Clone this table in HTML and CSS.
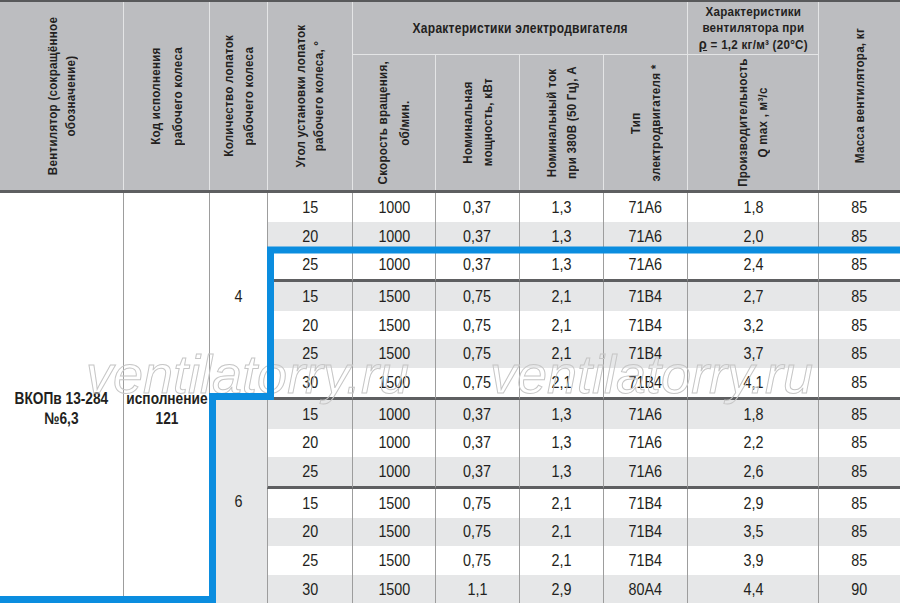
FILE: index.html
```html
<!DOCTYPE html>
<html lang="ru">
<head>
<meta charset="utf-8">
<title>ВКОПв 13-284 №6,3</title>
<link rel="stylesheet" href="styles.css">
</head>
<body>
<div class="sheet">
  <div class="cols head">
    <div class="hc tall first"><span class="vt lh18">Вентилятор (сокращённое<br>обозначение)</span></div>
    <div class="hc tall"><span class="vt lh22">Код исполнения<br>рабочего колеса</span></div>
    <div class="hc tall"><span class="vt">Количество лопаток<br>рабочего колеса</span></div>
    <div class="hc tall"><span class="vt lh18">Угол установки лопаток<br>рабочего колеса, °</span></div>
    <div class="hc grp"><span class="ht">Характеристики электродвигателя</span></div>
    <div class="hc grp2"><span class="ht">Характеристики<br>вентилятора при<br><span class="rho">ρ</span> = 1,2 кг/м³ (20°С)</span></div>
    <div class="hc tall"><span class="vt">Масса вентилятора, кг</span></div>
    <div class="hc"><span class="vt lh22">Скорость вращения,<br>об/мин.</span></div>
    <div class="hc"><span class="vt">Номинальная<br>мощность, кВт</span></div>
    <div class="hc"><span class="vt">Номинальный ток<br>при 380В (50 Гц), А</span></div>
    <div class="hc"><span class="vt">Тип<br>электродвигателя *</span></div>
    <div class="hc"><span class="vt">Производительность<br>Q max , м³/с</span></div>
  </div>

  <div class="cols body">
    <div class="bc name"><span>ВКОПв 13-284<br>№6,3</span></div>
    <div class="bc code"><span>исполнение<br>121</span></div>
    <div class="bc blades4"><span>4</span></div>
    <div class="bc blades6"><span>6</span></div>

    <div class="r"><div class="bc"><span>15</span></div><div class="bc"><span>1000</span></div><div class="bc"><span>0,37</span></div><div class="bc"><span>1,3</span></div><div class="bc"><span>71А6</span></div><div class="bc"><span>1,8</span></div><div class="bc"><span>85</span></div></div>
    <div class="r alt"><div class="bc"><span>20</span></div><div class="bc"><span>1000</span></div><div class="bc"><span>0,37</span></div><div class="bc"><span>1,3</span></div><div class="bc"><span>71А6</span></div><div class="bc"><span>2,0</span></div><div class="bc"><span>85</span></div></div>
    <div class="r sep"><div class="bc"><span>25</span></div><div class="bc"><span>1000</span></div><div class="bc"><span>0,37</span></div><div class="bc"><span>1,3</span></div><div class="bc"><span>71А6</span></div><div class="bc"><span>2,4</span></div><div class="bc"><span>85</span></div></div>
    <div class="r alt"><div class="bc"><span>15</span></div><div class="bc"><span>1500</span></div><div class="bc"><span>0,75</span></div><div class="bc"><span>2,1</span></div><div class="bc"><span>71В4</span></div><div class="bc"><span>2,7</span></div><div class="bc"><span>85</span></div></div>
    <div class="r"><div class="bc"><span>20</span></div><div class="bc"><span>1500</span></div><div class="bc"><span>0,75</span></div><div class="bc"><span>2,1</span></div><div class="bc"><span>71В4</span></div><div class="bc"><span>3,2</span></div><div class="bc"><span>85</span></div></div>
    <div class="r alt"><div class="bc"><span>25</span></div><div class="bc"><span>1500</span></div><div class="bc"><span>0,75</span></div><div class="bc"><span>2,1</span></div><div class="bc"><span>71В4</span></div><div class="bc"><span>3,7</span></div><div class="bc"><span>85</span></div></div>
    <div class="r sep"><div class="bc"><span>30</span></div><div class="bc"><span>1500</span></div><div class="bc"><span>0,75</span></div><div class="bc"><span>2,1</span></div><div class="bc"><span>71В4</span></div><div class="bc"><span>4,1</span></div><div class="bc"><span>85</span></div></div>
    <div class="r alt"><div class="bc"><span>15</span></div><div class="bc"><span>1000</span></div><div class="bc"><span>0,37</span></div><div class="bc"><span>1,3</span></div><div class="bc"><span>71А6</span></div><div class="bc"><span>1,8</span></div><div class="bc"><span>85</span></div></div>
    <div class="r"><div class="bc"><span>20</span></div><div class="bc"><span>1000</span></div><div class="bc"><span>0,37</span></div><div class="bc"><span>1,3</span></div><div class="bc"><span>71А6</span></div><div class="bc"><span>2,2</span></div><div class="bc"><span>85</span></div></div>
    <div class="r alt sep"><div class="bc"><span>25</span></div><div class="bc"><span>1000</span></div><div class="bc"><span>0,37</span></div><div class="bc"><span>1,3</span></div><div class="bc"><span>71А6</span></div><div class="bc"><span>2,6</span></div><div class="bc"><span>85</span></div></div>
    <div class="r"><div class="bc"><span>15</span></div><div class="bc"><span>1500</span></div><div class="bc"><span>0,75</span></div><div class="bc"><span>2,1</span></div><div class="bc"><span>71В4</span></div><div class="bc"><span>2,9</span></div><div class="bc"><span>85</span></div></div>
    <div class="r alt"><div class="bc"><span>20</span></div><div class="bc"><span>1500</span></div><div class="bc"><span>0,75</span></div><div class="bc"><span>2,1</span></div><div class="bc"><span>71В4</span></div><div class="bc"><span>3,5</span></div><div class="bc"><span>85</span></div></div>
    <div class="r"><div class="bc"><span>25</span></div><div class="bc"><span>1500</span></div><div class="bc"><span>0,75</span></div><div class="bc"><span>2,1</span></div><div class="bc"><span>71В4</span></div><div class="bc"><span>3,9</span></div><div class="bc"><span>85</span></div></div>
    <div class="r alt"><div class="bc"><span>30</span></div><div class="bc"><span>1500</span></div><div class="bc"><span>1,1</span></div><div class="bc"><span>2,9</span></div><div class="bc"><span>80А4</span></div><div class="bc"><span>4,4</span></div><div class="bc"><span>90</span></div></div>
  </div>

  <div class="wm wm1">ventilatorry.ru</div>
  <div class="wm wm2">ventilatorry.ru</div>

  <svg class="frame" width="900" height="603" viewBox="0 0 900 603" aria-hidden="true">
    <polyline points="900,250 270.5,250 270.5,396.5 212.5,396.5 212.5,599.5 0,599.5" fill="none" stroke="#0b8ddf" stroke-width="7" stroke-linejoin="miter"/>
  </svg>
</div>
</body>
</html>
```

FILE: styles.css
```css
* {
  box-sizing: border-box;
  margin: 0;
  padding: 0;
}

html,
body {
  width: 900px;
  height: 603px;
  overflow: hidden;
  background: #ffffff;
}

body {
  font-family: "Liberation Sans", Arial, sans-serif;
  color: #231f20;
}

.sheet {
  position: relative;
  width: 900px;
}

.cols {
  display: grid;
  grid-template-columns: 123px 86px 58px 85px 83px 84px 84px 84px 131px 82px;
}

/* ---------- header ---------- */
.head {
  grid-template-rows: 53px 135px;
  background: #bcbdc0;
  border-top: 2px solid #58595b;
  border-bottom: 3px solid #5e5f61;
  font-weight: bold;
  font-size: 13.5px;
  letter-spacing: 0.3px;
}

.hc {
  display: flex;
  align-items: center;
  justify-content: center;
  text-align: center;
  border-left: 1px solid #e4e5e6;
  overflow: visible;
}

.hc.first {
  border-left: 0;
}

.tall {
  grid-row: span 2;
}

.grp {
  grid-column: span 4;
  border-bottom: 1px solid #e4e5e6;
  font-size: 14px;
}

.grp2 {
  border-bottom: 1px solid #e4e5e6;
  line-height: 16px;
  font-size: 13.5px;
}

.ht {
  display: inline-block;
  white-space: nowrap;
  transform: scaleX(0.86);
}

.rho {
  font-size: 15px;
  text-decoration: underline;
}

.vt {
  writing-mode: vertical-rl;
  white-space: nowrap;
  transform: rotate(180deg) scale(1, 0.86);
  line-height: 20px;
}

.vt.lh18 {
  line-height: 18px;
}

.vt.lh22 {
  line-height: 22px;
}

/* ---------- body ---------- */
.body {
  grid-template-rows:
    28.7px 28.7px 31.7px
    28.7px 28.7px 28.7px 31.7px
    28.7px 28.7px 31.7px
    28.7px 28.7px 28.7px 28.7px;
  font-size: 16.5px;
}

.r {
  display: contents;
}

.bc {
  display: flex;
  align-items: center;
  justify-content: center;
  text-align: center;
  border-left: 1px solid #9d9d9d;
  background: #ffffff;
}

.bc > span {
  display: inline-block;
  white-space: nowrap;
  transform: scaleX(0.87);
}

.r.alt > .bc {
  background: #e6e7e8;
}

.r.sep > .bc {
  border-bottom: 3px solid #5e5f61;
}

.name {
  grid-row: 1 / 15;
  grid-column: 1;
  border-left: 0;
  font-weight: bold;
  line-height: 20px;
  padding-top: 20px;
}

.code {
  grid-row: 1 / 15;
  grid-column: 2;
  font-weight: bold;
  line-height: 20px;
  padding-top: 20px;
}

.name > span,
.code > span {
  transform: scaleX(0.83);
}

.blades4 {
  grid-row: 1 / 8;
  grid-column: 3;
}

.blades6 {
  grid-row: 8 / 15;
  grid-column: 3;
  background: #e6e7e8;
}

/* ---------- overlays ---------- */
.wm {
  position: absolute;
  top: 347px;
  font-family: "Liberation Sans", Arial, sans-serif;
  font-style: italic;
  font-size: 54px;
  line-height: 54px;
  color: transparent;
  -webkit-text-stroke: 1px #c6c6c6;
  white-space: nowrap;
  pointer-events: none;
}

.wm1 {
  left: 86px;
}

.wm2 {
  left: 490px;
}

.frame {
  position: absolute;
  top: 0;
  left: 0;
  pointer-events: none;
}
```
